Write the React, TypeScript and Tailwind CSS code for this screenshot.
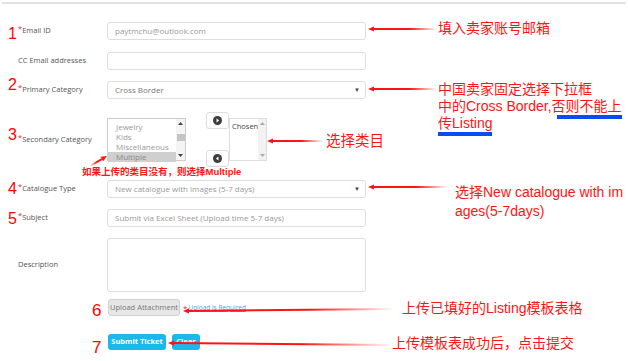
import React from 'react';

const red = '#ff1414';

const Label: React.FC<{ text?: string; required?: boolean }> = ({ text, required }) => (
  <div className="w-[107px] shrink-0 pl-[18px] text-[7.5px] text-[#555]">
    {required && <span className="relative -top-[2px] text-[#e22]">*</span>}
    {text}
  </div>
);

const Field: React.FC<{ value?: string; dark?: boolean; caret?: boolean }> = ({ value, dark, caret }) => (
  <div className="flex items-center w-[259px] h-full border border-[#ddd] rounded-[3px] bg-white pl-[7px] pr-[5px]">
    <span className={`flex-1 truncate text-[8px] ${dark ? 'text-[#777]' : 'text-[#999]'}`}>{value}</span>
    {caret && <span className="text-[6px] text-[#444]">▼</span>}
  </div>
);

const ScrollArrows: React.FC<{ thumb?: boolean; light?: boolean }> = ({ thumb, light }) => (
  <div className={`flex flex-col items-center justify-between w-[9px] h-full py-[3px] ${light ? 'bg-[#f2f2f2]' : 'bg-[#f4f4f4]'}`}>
    <svg width="5" height="3" viewBox="0 0 5 3"><polygon points="2.5,0 5,3 0,3" fill={light ? '#aaa' : '#444'} /></svg>
    {thumb && <div className="w-[8px] h-[7px] bg-[#c4c4c4] -mt-[4px]" />}
    <svg width="5" height="3" viewBox="0 0 5 3"><polygon points="0,0 5,0 2.5,3" fill={light ? '#aaa' : '#444'} /></svg>
  </div>
);

const MoveButton: React.FC<{ dir: 'left' | 'right' }> = ({ dir }) => (
  <div className="flex items-center justify-center w-[23px] h-[17px] border border-[#ddd] rounded-[3px] bg-white">
    <svg width="9" height="9" viewBox="0 0 9 9">
      <circle cx="4.5" cy="4.5" r="4.5" fill="#3d3d3d" />
      {dir === 'right' ? (
        <polygon points="3.5,2.6 6.2,4.5 3.5,6.4" fill="#fff" />
      ) : (
        <polygon points="5.5,2.6 2.8,4.5 5.5,6.4" fill="#fff" />
      )}
    </svg>
  </div>
);

type Arrow = { x1: number; y1: number; x2: number; y2: number };

// head at (x1,y1), tail fading out at (x2,y2)
const arrows: Arrow[] = [
  { x1: 368, y1: 29, x2: 437, y2: 29 },
  { x1: 368, y1: 89, x2: 437, y2: 89 },
  { x1: 267, y1: 141, x2: 323, y2: 141 },
  { x1: 368, y1: 187, x2: 448, y2: 187 },
  { x1: 183, y1: 311, x2: 394, y2: 309 },
  { x1: 168, y1: 343, x2: 392, y2: 345 },
  { x1: 107, y1: 156, x2: 90, y2: 166 },
];

const numbers = [
  { n: '1', x: 8, y: 26, size: 'text-[16px]' },
  { n: '2', x: 8, y: 77, size: 'text-[16px]' },
  { n: '3', x: 8, y: 127, size: 'text-[16px]' },
  { n: '4', x: 8, y: 181, size: 'text-[16px]' },
  { n: '5', x: 8, y: 211, size: 'text-[16px]' },
  { n: '6', x: 92, y: 302, size: 'text-[17px]' },
  { n: '7', x: 92, y: 339, size: 'text-[17px]' },
];

export default function App() {
  return (
    <div className="relative w-[628px] h-[361px] bg-white overflow-hidden font-['Open_Sans',sans-serif]">
      <div className="mx-[2px] mt-[2px] h-[2px] bg-[#e2e2e2]" />

      {/* form */}
      <div className="flex flex-col pt-[18px]">
        <div className="flex items-center h-[18px]">
          <Label text="Email ID" required />
          <Field value="paytmchu@outlook.com" />
        </div>
        <div className="flex items-center h-[18px] mt-[12px]">
          <Label text="CC Email addresses" />
          <Field />
        </div>
        <div className="flex items-center h-[18px] mt-[11px]">
          <Label text="Primary Category" required />
          <Field value="Cross Border" dark caret />
        </div>

        {/* secondary category */}
        <div className="flex items-center h-[55px] mt-[13px]">
          <Label text="Secondary Category" required />
          <div className="self-start mt-[6px] flex w-[79px] h-[43px] border border-[#ccc] bg-white">
            <div className="flex-1 flex flex-col pt-[3px] text-[8px] leading-[10px] text-[#999]">
              <span className="pl-[8px]">Jewelry</span>
              <span className="pl-[8px]">Kids</span>
              <span className="pl-[8px]">Miscellaneous</span>
              <span className="pl-[8px] bg-[#cfcfcf] text-[#888]">Multiple</span>
            </div>
            <ScrollArrows thumb />
          </div>
          <div className="flex flex-col justify-between h-full ml-[20px]">
            <MoveButton dir="right" />
            <MoveButton dir="left" />
          </div>
          <div className="self-start mt-[6px] flex w-[38px] h-[43px] border border-[#ddd] bg-white">
            <span className="flex-1 pl-[2px] pt-[2px] text-[7.5px] text-[#444]">Chosen</span>
            <ScrollArrows light />
          </div>
        </div>

        <div className="flex items-center h-[18px] mt-[13px]">
          <Label text="Catalogue Type" required />
          <Field value="New catalogue with images (5-7 days)" caret />
        </div>
        <div className="flex items-center h-[18px] mt-[11px]">
          <Label text="Subject" required />
          <Field value="Submit via Excel Sheet (Upload time 5-7 days)" />
        </div>
        <div className="flex items-center h-[54px] mt-[11px]">
          <Label text="Description" />
          <div className="w-[259px] h-full border border-[#ddd] rounded-[3px] bg-white" />
        </div>

        <div className="flex items-center h-[17px] mt-[7px] pl-[108px]">
          <div className="flex items-center justify-center w-[72px] h-full bg-[#e6e6e6] border border-[#d2d2d2] rounded-[3px] text-[7.5px] text-[#777]">
            Upload Attachment
          </div>
          <span className="ml-[3px] text-[8px] text-[#e22]">*</span>
          <span className="ml-[1px] text-[6.5px] text-[#5a9bd5] underline">Upload is Required</span>
        </div>

        <div className="flex items-center h-[16px] mt-[18px] pl-[108px] gap-[6px]">
          <div className="flex items-center justify-center w-[58px] h-full bg-[#1cb8ec] rounded-[3px] text-[7.5px] font-bold text-white">
            Submit Ticket
          </div>
          <div className="flex items-center justify-center w-[28px] h-full bg-[#1cb8ec] rounded-[3px] text-[7.5px] font-bold text-white">
            Clear
          </div>
        </div>
      </div>

      {/* annotations drawn over the screenshot */}
      <svg className="absolute inset-0 pointer-events-none" width="628" height="361">
        <defs>
          {arrows.map((a, i) => (
            <linearGradient key={i} id={`fade${i}`} gradientUnits="userSpaceOnUse" x1={a.x1} y1={a.y1} x2={a.x2} y2={a.y2}>
              <stop offset="0" stopColor={red} />
              <stop offset="0.6" stopColor={red} />
              <stop offset="1" stopColor={red} stopOpacity="0" />
            </linearGradient>
          ))}
        </defs>
        {arrows.map((a, i) => {
          const ang = Math.atan2(a.y2 - a.y1, a.x2 - a.x1);
          const len = 6;
          const w = 2.6;
          const bx = a.x1 + Math.cos(ang) * len;
          const by = a.y1 + Math.sin(ang) * len;
          const px = -Math.sin(ang) * w;
          const py = Math.cos(ang) * w;
          return (
            <g key={i}>
              <line x1={bx} y1={by} x2={a.x2} y2={a.y2} stroke={`url(#fade${i})`} strokeWidth="2" />
              <polygon points={`${a.x1},${a.y1} ${bx + px},${by + py} ${bx - px},${by - py}`} fill={red} />
            </g>
          );
        })}
      </svg>

      {numbers.map((d) => (
        <span
          key={d.n}
          className={`absolute leading-none font-['Liberation_Sans',sans-serif] text-[#f00] ${d.size}`}
          style={{ left: d.x, top: d.y }}
        >
          {d.n}
        </span>
      ))}

      <div className="absolute inset-0 pointer-events-none font-['Liberation_Sans','Noto_Sans_CJK_SC',sans-serif] text-[14px] text-[#ff1414]">
        <div className="absolute left-[438px] top-[20px] leading-[17px]">填入卖家账号邮箱</div>
        <div className="absolute left-[438px] top-[81px] leading-[17px] whitespace-nowrap">
          <div>中国卖家固定选择下拉框</div>
          <div>中的Cross Border,否则不能上</div>
          <div>传Listing</div>
        </div>
        <div className="absolute left-[557px] top-[115px] w-[65px] h-[4px] bg-[#0a4cf0]" />
        <div className="absolute left-[438px] top-[132px] w-[54px] h-[4px] bg-[#0a4cf0]" />
        <div className="absolute left-[326px] top-[133px] text-[14.5px] leading-[17px]">选择类目</div>
        <div className="absolute left-[82px] top-[166px] text-[9.5px] leading-[12px] font-bold whitespace-nowrap">
          如果上传的类目没有，则选择Multiple
        </div>
        <div className="absolute left-[455px] top-[183px] leading-[19px] whitespace-nowrap">
          <div>选择New catalogue with im</div>
          <div>ages(5-7days)</div>
        </div>
        <div className="absolute left-[402px] top-[300px] leading-[17px] whitespace-nowrap">上传已填好的Listing模板表格</div>
        <div className="absolute left-[392px] top-[335px] leading-[17px] whitespace-nowrap">上传模板表成功后，点击提交</div>
      </div>
    </div>
  );
}
